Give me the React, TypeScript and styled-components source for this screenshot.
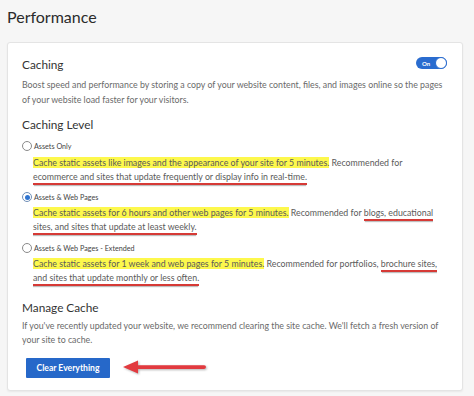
import React from 'react';
import styled, { createGlobalStyle } from 'styled-components';

const GlobalStyle = createGlobalStyle`
  html, body {
    margin: 0;
    background: #f6f6f6;
    font-family: Lato, "Noto Sans", sans-serif;
  }
`;

const Page = styled.div`
  width: 474px;
  height: 396px;
  overflow: hidden;
`;

const Title = styled.h1`
  margin: 0;
  padding: 6px 0 0 7px;
  height: 36px;
  font-size: 16px;
  font-weight: 400;
  line-height: 22px;
  color: #2b2b2b;
`;

const Card = styled.section`
  margin: 0 11px 0 7px;
  height: 349px;
  box-sizing: border-box;
  padding: 14px 14px 12px 14px;
  background: #fff;
  border: 1px solid #e4e4e4;
  border-radius: 3px;
  box-shadow: 0 1px 2px rgba(0, 0, 0, 0.06);
`;

const HeaderRow = styled.div`
  display: flex;
  justify-content: space-between;
  align-items: flex-start;
`;

const Heading = styled.h2<{ $top?: number }>`
  margin: ${(p) => p.$top ?? 0}px 0 0;
  font-size: 11.8px;
  font-weight: 400;
  line-height: 16px;
  color: #333;
`;

const Description = styled.p<{ $top?: number; $lh?: number }>`
  margin: ${(p) => p.$top ?? 0}px 0 0;
  font-size: 8.8px;
  line-height: ${(p) => p.$lh ?? 14}px;
  color: #6a6a6a;
`;

const Toggle = styled.div`
  position: relative;
  width: 31px;
  height: 12px;
  border-radius: 6px;
  background: #2a6ccf;
  margin-right: 1px;
  display: flex;
  align-items: center;
  padding-left: 6px;
  box-sizing: border-box;
  font-size: 6px;
  font-weight: 700;
  color: #fff;
`;

const Knob = styled.span`
  position: absolute;
  right: 0;
  top: 0;
  width: 12px;
  height: 12px;
  box-sizing: border-box;
  border-radius: 50%;
  background: #fff;
  border: 1px solid #2a6ccf;
`;

const OptionRow = styled.label<{ $top: number }>`
  display: flex;
  align-items: center;
  gap: 2px;
  height: 12px;
  margin-top: ${(p) => p.$top}px;
  font-size: 7.2px;
  color: #444;
`;

const Radio = styled.span<{ $checked?: boolean }>`
  width: 10px;
  height: 10px;
  box-sizing: border-box;
  border-radius: 50%;
  border: 1px solid ${(p) => (p.$checked ? '#6f8fb8' : '#8a8a8a')};
  background: #fff;
  display: flex;
  align-items: center;
  justify-content: center;
  &::after {
    content: '';
    width: 5px;
    height: 5px;
    border-radius: 50%;
    background: ${(p) => (p.$checked ? '#2f74d0' : 'transparent')};
  }
`;

const OptionText = styled.p<{ $top: number }>`
  margin: ${(p) => p.$top}px 0 0 11px;
  max-width: 412px;
  font-size: 8.8px;
  line-height: 14px;
  color: #5a5a5a;
`;

const Mark = styled.span`
  background: #fdf84c;
`;

const Underline = styled.span`
  border-bottom: 2px solid #d63a36;
  padding-bottom: 1px;
  box-shadow: 0 2px 1px -1px rgba(0, 0, 0, 0.25);
`;

const ActionRow = styled.div`
  display: flex;
  align-items: center;
  margin-top: 11px;
  padding-left: 4px;
  gap: 13px;
`;

const Button = styled.button`
  width: 84px;
  height: 20px;
  padding: 0;
  border: none;
  border-radius: 1px;
  background: #2668c9;
  color: #fff;
  font-family: inherit;
  font-size: 8.6px;
  font-weight: 700;
`;

const Arrow = styled.svg`
  filter: drop-shadow(1px 1.5px 1px rgba(0, 0, 0, 0.3));
`;

export default function App() {
  return (
    <Page>
      <GlobalStyle />
      <Title>Performance</Title>
      <Card>
        <HeaderRow>
          <Heading>Caching</Heading>
          <Toggle>
            On
            <Knob />
          </Toggle>
        </HeaderRow>
        <Description $top={4} $lh={15}>
          Boost speed and performance by storing a copy of your website content, files, and images online so the pages
          of your website load faster for your visitors.
        </Description>

        <Heading $top={10}>Caching Level</Heading>

        <OptionRow $top={7}>
          <Radio />
          Assets Only
        </OptionRow>
        <OptionText $top={4}>
          <Mark>Cache static assets like images and the appearance of your site for 5 minutes.</Mark> Recommended for{' '}
          <Underline>ecommerce and sites that update frequently or display info in real-time.</Underline>
        </OptionText>

        <OptionRow $top={7}>
          <Radio $checked />
          Assets &amp; Web Pages
        </OptionRow>
        <OptionText $top={3}>
          <Mark>Cache static assets for 6 hours and other web pages for 5 minutes.</Mark> Recommended for{' '}
          <Underline>blogs, educational sites, and sites that update at least weekly.</Underline>
        </OptionText>

        <OptionRow $top={8}>
          <Radio />
          Assets &amp; Web Pages - Extended
        </OptionRow>
        <OptionText $top={3}>
          <Mark>Cache static assets for 1 week and web pages for 5 minutes.</Mark> Recommended for portfolios,{' '}
          <Underline>brochure sites, and sites that update monthly or less often.</Underline>
        </OptionText>

        <Heading $top={15}>Manage Cache</Heading>
        <Description $top={3}>
          If you've recently updated your website, we recommend clearing the site cache. We'll fetch a fresh version of
          your site to cache.
        </Description>

        <ActionRow>
          <Button>Clear Everything</Button>
          <Arrow width="86" height="18" viewBox="0 0 86 18">
            <path d="M0 8 L15 1.5 L15 14.5 Z" fill="#e23a3f" />
            <rect x="13" y="6.3" width="70" height="3.6" rx="1.8" fill="#e23a3f" />
          </Arrow>
        </ActionRow>
      </Card>
    </Page>
  );
}
